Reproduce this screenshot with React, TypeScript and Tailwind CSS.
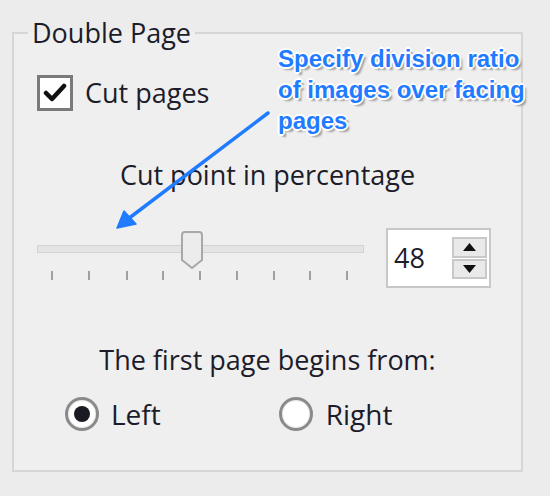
import React from 'react'

const ticks = [52, 89, 127, 163, 200, 237, 274, 310, 347]

function Radio({ checked }: { checked?: boolean }) {
  return (
    <span className="flex h-[34px] w-[34px] items-center justify-center rounded-full border-[3px] border-[#8a8a8a] bg-white shadow-[inset_0_0_2px_#bbb]">
      {checked && <span className="h-[16px] w-[16px] rounded-full bg-[#1a1a22]" />}
    </span>
  )
}

export default function App() {
  const font = { fontFamily: '"Open Sans", "Noto Sans", sans-serif' }

  return (
    <div className="relative h-[496px] w-[550px] overflow-hidden bg-[#ececec] pt-[18px] text-[#1c1c2a]" style={font}>
      <fieldset className="ml-[12px] h-[454px] w-[511px] border-2 border-[#d6d6d6] bg-[#efefef]">
        <legend className="ml-[14px] px-[4px] text-[27px] leading-[30px]">Double Page</legend>

        {/* Cut pages */}
        <div className="mt-[27px] ml-[23px] flex items-center gap-[12px]">
          <span className="flex h-[36px] w-[36px] items-center justify-center border-[3px] border-[#7a7a7a] bg-white">
            <svg width="24" height="22" viewBox="0 0 24 22">
              <path d="M3 11 L9 17 L21 4" fill="none" stroke="#111" strokeWidth="4.5" strokeLinecap="round" strokeLinejoin="round" />
            </svg>
          </span>
          <span className="text-[27px] leading-[32px]">Cut pages</span>
        </div>

        <div className="mt-[48px] text-center text-[27px] leading-[32px]">Cut point in percentage</div>

        {/* slider + spinner */}
        <div className="mt-[40px] flex items-start">
          <div className="relative ml-[23px] w-[327px]">
            <div className="mt-[14px] h-[8px] w-full border border-[#d2d2d2] bg-[#e4e4e4]" />
            <div className="absolute left-[143px] top-[0px]">
              <svg width="24" height="38" viewBox="0 0 24 38">
                <path d="M2 4 Q2 1 5 1 L19 1 Q22 1 22 4 L22 29 L12 37 L2 29 Z" fill="#ececec" stroke="#a8a8a8" strokeWidth="2" />
              </svg>
            </div>
            <div className="relative mt-[18px] h-[10px]">
              {ticks.map((x) => (
                <span key={x} className="absolute top-0 h-[9px] w-[2px] bg-[#a0a0a0]" style={{ left: x - 38 }} />
              ))}
            </div>
          </div>
          <div className="ml-[22px] -mt-[3px] flex h-[60px] w-[105px] border-2 border-[#c8c8c8] bg-white p-[1px]">
            <span className="flex flex-1 items-center pl-[5px] text-[27px]">48</span>
            <div className="flex w-[36px] flex-col gap-[1px] py-[6px] pr-[1px]">
              <span className="flex flex-1 items-center justify-center border-2 border-[#c8c8c8] bg-[#e9e9e9]">
                <svg width="13" height="8" viewBox="0 0 13 8"><path d="M0 8 L6.5 0 L13 8 Z" fill="#111" /></svg>
              </span>
              <span className="flex flex-1 items-center justify-center border-2 border-[#c8c8c8] bg-[#e9e9e9]">
                <svg width="13" height="8" viewBox="0 0 13 8"><path d="M0 0 L6.5 8 L13 0 Z" fill="#111" /></svg>
              </span>
            </div>
          </div>
        </div>

        <div className="mt-[56px] text-center text-[27px] leading-[32px]">The first page begins from:</div>

        <div className="mt-[21px] flex items-center">
          <div className="ml-[51px] flex items-center gap-[12px]">
            <Radio checked />
            <span className="text-[28px] leading-[32px]">Left</span>
          </div>
          <div className="ml-[118px] flex items-center gap-[13px]">
            <Radio />
            <span className="text-[28px] leading-[32px]">Right</span>
          </div>
        </div>
      </fieldset>

      {/* annotation */}
      <div
        className="absolute left-[278px] top-[43px] text-[24px] font-bold leading-[31px] text-[#1f7bff]"
        style={{
          fontFamily: '"Liberation Sans", Arial, sans-serif',
          textShadow:
            '-2px 0 #fff, 2px 0 #fff, 0 -2px #fff, 0 2px #fff, -1px -1px #fff, 1px 1px #fff, -1px 1px #fff, 1px -1px #fff, 3px 3px 2px #9a9a9a',
        }}
      >
        Specify division ratio
        <br />
        of images over facing
        <br />
        pages
      </div>
      <svg className="absolute left-0 top-0" width="550" height="496" viewBox="0 0 550 496">
        <line x1="268" y1="113" x2="128" y2="219" stroke="#1f7bff" strokeWidth="3.5" strokeLinecap="round" />
        <path d="M117 228 L124 211 L136 224 Z" fill="#1f7bff" stroke="#1f7bff" strokeWidth="1.5" strokeLinejoin="round" />
      </svg>
    </div>
  )
}
